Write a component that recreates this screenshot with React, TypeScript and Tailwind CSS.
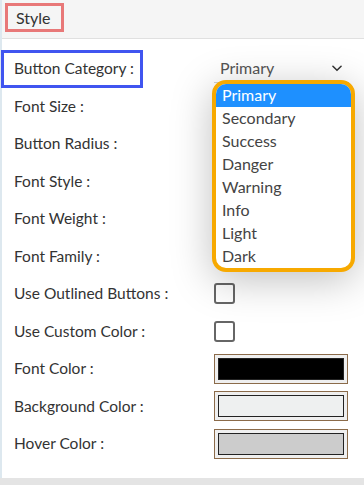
import React from 'react'

const options = ['Primary', 'Secondary', 'Success', 'Danger', 'Warning', 'Info', 'Light', 'Dark']

type rowType = {
  label: string
  kind?: 'select' | 'check' | 'color' | 'none'
  color?: string
}

const rows: rowType[] = [
  { label: 'Button Category :', kind: 'select' },
  { label: 'Font Size :' },
  { label: 'Button Radius :' },
  { label: 'Font Style :' },
  { label: 'Font Weight :' },
  { label: 'Font Family :' },
  { label: 'Use Outlined Buttons :', kind: 'check' },
  { label: 'Use Custom Color :', kind: 'check' },
  { label: 'Font Color :', kind: 'color', color: 'bg-black' },
  { label: 'Background Color :', kind: 'color', color: 'bg-[#eef0f0]' },
  { label: 'Hover Color :', kind: 'color', color: 'bg-[#cccccc]' },
]

function ColorBox({ color }: { color?: string }) {
  return (
    <div className="w-[134px] h-[30px] border border-[#8b6b4a] bg-[#efefef] p-[3px]">
      <div className={`w-full h-full border border-[#222] ${color}`} />
    </div>
  )
}

export default function App() {
  return (
    <div className="w-[364px] h-[485px] bg-[#e4e4e4] overflow-hidden" style={{ fontFamily: 'Lato, "Open Sans", sans-serif' }}>
      <div className="w-[364px] h-[478px] bg-white border-l-2 border-[#dde8ef] flex flex-col">
        <div className="h-[39px] bg-[#f5f5f5] border-b border-[#e0e0e0] flex items-start pl-[3px] pt-[3px]">
          <div className="border-[3px] border-[#e87878] h-[29px] w-[59px] flex items-center pl-[8px] text-[16px] text-[#333]">
            Style
          </div>
        </div>
        <div className="flex flex-col pt-[11px]">
          {rows.map((row, idx) => (
            <div key={idx} className="h-[37.5px] flex items-center text-[15.5px] text-[#333]">
              <div className="w-[212px] -ml-[2px] pl-[14px] h-full flex items-center">
                {row.kind === 'select' ? (
                  <div className="-ml-[13px] w-[142px] h-[38px] border-[3px] border-[#4055f0] pl-[10px] flex items-center">
                    {row.label}
                  </div>
                ) : (
                  row.label
                )}
              </div>
              <div className="relative pl-[2px]">
                {row.kind === 'select' && (
                  <div className="relative w-[135px]">
                    <div className="flex items-center justify-between h-[28px] border-b border-[#d0d0d0] pl-[6px] pr-[5px] text-[16px] text-[#555]">
                      <span>Primary</span>
                      <svg width="14" height="14" viewBox="0 0 24 24" fill="none" stroke="#333" strokeWidth="2.6" strokeLinecap="round" strokeLinejoin="round">
                        <path d="M5 9l7 7 7-7" />
                      </svg>
                    </div>
                    <div className="absolute left-[-2px] top-[25px] z-10 w-[143px] rounded-[14px] border-[4px] border-[#f7a900] bg-white shadow-[0_8px_40px_rgba(0,0,0,0.25)] overflow-hidden">
                      {options.map((opt, i) => (
                        <div key={opt} className={`h-[23px] flex items-center pl-[6px] text-[16px] ${i === 0 ? 'bg-[#1e90ff] text-white' : 'text-[#444]'}`}>
                          {opt}
                        </div>
                      ))}
                    </div>
                  </div>
                )}
                {row.kind === 'check' && (
                  <div className="w-[21px] h-[21px] border-2 border-[#666] rounded-[3px] bg-white" />
                )}
                {row.kind === 'color' && <ColorBox color={row.color} />}
              </div>
            </div>
          ))}
        </div>
      </div>
    </div>
  )
}
